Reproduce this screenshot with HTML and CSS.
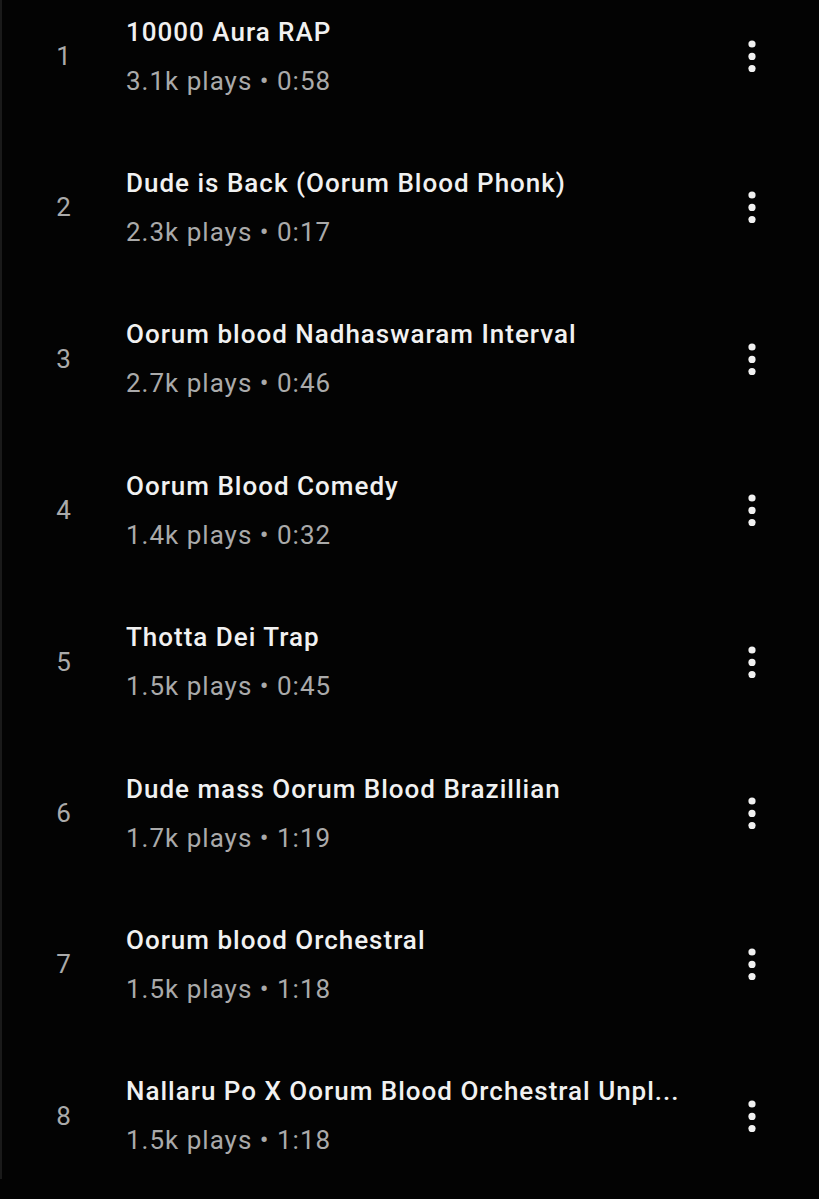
FILE: index.html
```html
<!DOCTYPE html>
<html lang="en">
<head>
<meta charset="utf-8">
<title>Tracks</title>
<link rel="stylesheet" href="styles.css">
</head>
<body>
<div class="page">
  <ol class="tracks">
    <li class="track">
      <span class="num">1</span>
      <div class="info"><div class="title">10000 Aura RAP</div><div class="meta">3.1k plays • 0:58</div></div>
      <button class="more" aria-label="More"><svg width="8" height="32" viewBox="0 0 8 32"><circle cx="4" cy="4" r="3.6"/><circle cx="4" cy="16.4" r="3.6"/><circle cx="4" cy="28.6" r="3.6"/></svg></button>
    </li>
    <li class="track">
      <span class="num">2</span>
      <div class="info"><div class="title">Dude is Back (Oorum Blood Phonk)</div><div class="meta">2.3k plays • 0:17</div></div>
      <button class="more" aria-label="More"><svg width="8" height="32" viewBox="0 0 8 32"><circle cx="4" cy="4" r="3.6"/><circle cx="4" cy="16.4" r="3.6"/><circle cx="4" cy="28.6" r="3.6"/></svg></button>
    </li>
    <li class="track">
      <span class="num">3</span>
      <div class="info"><div class="title">Oorum blood Nadhaswaram Interval</div><div class="meta">2.7k plays • 0:46</div></div>
      <button class="more" aria-label="More"><svg width="8" height="32" viewBox="0 0 8 32"><circle cx="4" cy="4" r="3.6"/><circle cx="4" cy="16.4" r="3.6"/><circle cx="4" cy="28.6" r="3.6"/></svg></button>
    </li>
    <li class="track">
      <span class="num">4</span>
      <div class="info"><div class="title">Oorum Blood Comedy</div><div class="meta">1.4k plays • 0:32</div></div>
      <button class="more" aria-label="More"><svg width="8" height="32" viewBox="0 0 8 32"><circle cx="4" cy="4" r="3.6"/><circle cx="4" cy="16.4" r="3.6"/><circle cx="4" cy="28.6" r="3.6"/></svg></button>
    </li>
    <li class="track">
      <span class="num">5</span>
      <div class="info"><div class="title">Thotta Dei Trap</div><div class="meta">1.5k plays • 0:45</div></div>
      <button class="more" aria-label="More"><svg width="8" height="32" viewBox="0 0 8 32"><circle cx="4" cy="4" r="3.6"/><circle cx="4" cy="16.4" r="3.6"/><circle cx="4" cy="28.6" r="3.6"/></svg></button>
    </li>
    <li class="track">
      <span class="num">6</span>
      <div class="info"><div class="title">Dude mass Oorum Blood Brazillian</div><div class="meta">1.7k plays • 1:19</div></div>
      <button class="more" aria-label="More"><svg width="8" height="32" viewBox="0 0 8 32"><circle cx="4" cy="4" r="3.6"/><circle cx="4" cy="16.4" r="3.6"/><circle cx="4" cy="28.6" r="3.6"/></svg></button>
    </li>
    <li class="track">
      <span class="num">7</span>
      <div class="info"><div class="title">Oorum blood Orchestral</div><div class="meta">1.5k plays • 1:18</div></div>
      <button class="more" aria-label="More"><svg width="8" height="32" viewBox="0 0 8 32"><circle cx="4" cy="4" r="3.6"/><circle cx="4" cy="16.4" r="3.6"/><circle cx="4" cy="28.6" r="3.6"/></svg></button>
    </li>
    <li class="track">
      <span class="num">8</span>
      <div class="info"><div class="title">Nallaru Po X Oorum Blood Orchestral Unpl...</div><div class="meta">1.5k plays • 1:18</div></div>
      <button class="more" aria-label="More"><svg width="8" height="32" viewBox="0 0 8 32"><circle cx="4" cy="4" r="3.6"/><circle cx="4" cy="16.4" r="3.6"/><circle cx="4" cy="28.6" r="3.6"/></svg></button>
    </li>
  </ol>
</div>
</body>
</html>
```
FILE: styles.css
```css
html, body {
  margin: 0;
  padding: 0;
  background: #030303;
  height: 100%;
  overflow: hidden;
}

.page {
  height: 100%;
  border-left: 2px solid #1a1a1a;
  box-sizing: border-box;
  font-family: Roboto, "Noto Sans", sans-serif;
}

.tracks {
  list-style: none;
  margin: -19.6px 0 0 0;
  padding: 0;
}

.track {
  height: 151.4px;
  display: grid;
  grid-template-columns: 122px 560px 1fr;
  align-items: center;
  padding-right: 43px;
}

.num {
  text-align: center;
  color: #aaaaaa;
  font-size: 26px;
  padding-left: 1px;
}

.info {
  display: flex;
  flex-direction: column;
  gap: 17px;
  min-width: 0;
  padding-left: 2px;
}

.title {
  color: #f1f1f1;
  font-size: 26px;
  font-weight: 500;
  letter-spacing: 1px;
  line-height: 32px;
  white-space: nowrap;
  overflow: hidden;
  text-overflow: ellipsis;
}

.meta {
  color: #aaaaaa;
  font-size: 26px;
  letter-spacing: 1px;
  line-height: 32px;
}

.more {
  justify-self: end;
  width: 48px;
  height: 48px;
  padding: 0;
  border: 0;
  background: none;
  display: flex;
  align-items: center;
  justify-content: center;
}

.more svg {
  fill: #f1f1f1;
  display: block;
}
```
